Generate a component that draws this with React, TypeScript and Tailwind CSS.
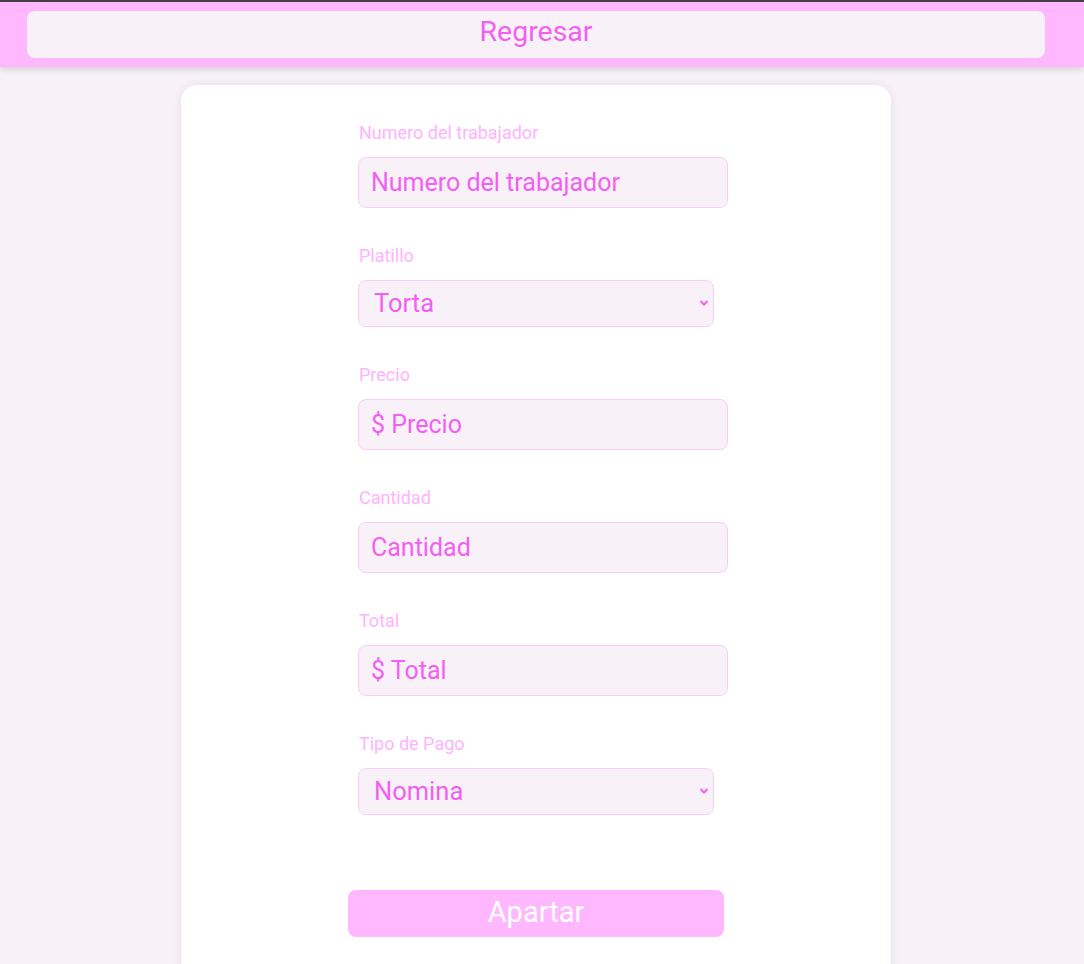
const font = { fontFamily: "Roboto, 'Noto Sans', sans-serif" };

function Field({ label, placeholder }: { label: string; placeholder: string }) {
  return (
    <div className="flex flex-col">
      <label className="text-[18px] leading-5 text-[#ffb3ff] pl-px">{label}</label>
      <input
        placeholder={placeholder}
        className="mt-[14px] w-[370px] h-[51px] rounded-lg border border-[#f7cdf7] bg-[#f8f2f8] px-3 text-[25px] text-[#f25ff2] placeholder:text-[#f25ff2] outline-none"
      />
    </div>
  );
}

function SelectField({ label, options }: { label: string; options: string[] }) {
  return (
    <div className="flex flex-col">
      <label className="text-[18px] leading-5 text-[#ffb3ff] pl-px">{label}</label>
      <div className="relative mt-[14px] w-[356px] h-[47px]">
        <select className="appearance-none w-full h-full rounded-lg border border-[#f7cdf7] bg-[#f8f2f8] pl-[15px] pr-8 text-[25.5px] text-[#f25ff2] outline-none">
          {options.map((o) => (
            <option key={o}>{o}</option>
          ))}
        </select>
        <svg className="absolute right-[5px] top-[19px] pointer-events-none" width="10" height="8" viewBox="0 0 10 8">
          <path d="M1.5 2 L5 5.5 L8.5 2" stroke="#f25ff2" strokeWidth="2" fill="none" />
        </svg>
      </div>
    </div>
  );
}

export default function App() {
  return (
    <div className="min-h-[964px] bg-[#f8f2f8] overflow-hidden" style={font}>
      <div className="h-[2px] bg-[#444044]" />
      <header className="bg-[#ffb8ff] pl-[27px] pr-[39px] py-[9px] shadow-[0_3px_6px_rgba(0,0,0,0.12)] relative z-10">
        <button className="w-full h-[47px] rounded-lg bg-[#f8f2f8] text-[28.5px] leading-none pb-[4px] text-[#f25ff2]">
          Regresar
        </button>
      </header>
      <main className="ml-[181px] mt-[18px] w-[710px] min-h-[900px] rounded-2xl bg-white shadow-[0_0_8px_rgba(0,0,0,0.08)] pt-[38px] pl-[177px]">
        <div className="flex flex-col gap-[38px]">
          <Field label="Numero del trabajador" placeholder="Numero del trabajador" />
          <SelectField label="Platillo" options={["Torta"]} />
          <Field label="Precio" placeholder="$ Precio" />
          <Field label="Cantidad" placeholder="Cantidad" />
          <Field label="Total" placeholder="$ Total" />
          <SelectField label="Tipo de Pago" options={["Nomina"]} />
        </div>
        <button className="mt-[75px] -ml-[10px] w-[376px] h-[47px] rounded-lg bg-[#ffb8ff] text-[29px] leading-none pb-[3px] text-white">
          Apartar
        </button>
      </main>
    </div>
  );
}
